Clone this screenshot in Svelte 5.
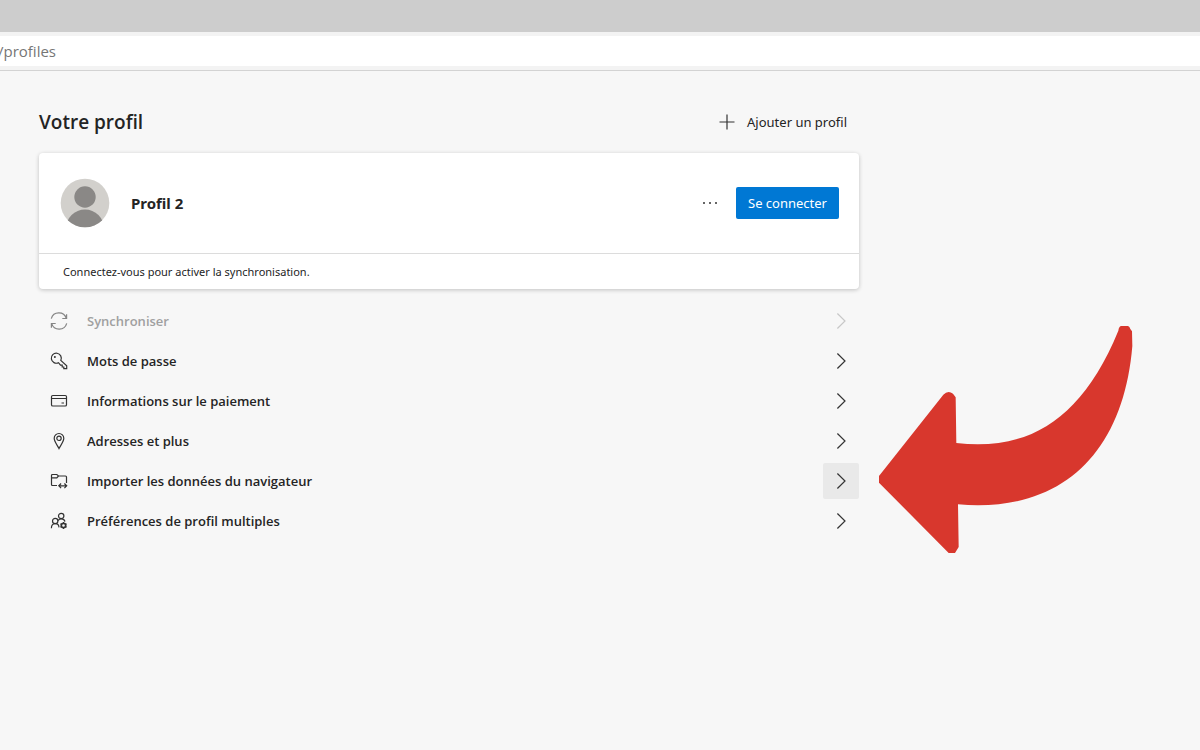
<script>
  const rows = [
    { id: 'sync', label: 'Synchroniser', disabled: true },
    { id: 'key', label: 'Mots de passe' },
    { id: 'card', label: 'Informations sur le paiement' },
    { id: 'pin', label: 'Adresses et plus' },
    { id: 'import', label: 'Importer les données du navigateur', active: true },
    { id: 'people', label: 'Préférences de profil multiples' }
  ];
</script>

<div class="page">
  <header>
    <div class="tabs"></div>
    <div class="toolbar">
      <input class="address" aria-label="Adresse" value="/profiles" />
    </div>
  </header>

  <main>
    <section class="content">
      <div class="heading">
        <h1>Votre profil</h1>
        <button class="add">
          <svg width="16" height="16" viewBox="0 0 16 16" aria-hidden="true">
            <path d="M8 .5v15M.5 8h15" />
          </svg>
          <span>Ajouter un profil</span>
        </button>
      </div>

      <div class="card">
        <div class="identity">
          <svg class="avatar" width="50" height="50" viewBox="0 0 50 50" aria-hidden="true">
            <clipPath id="disc"><circle cx="25" cy="25" r="24.3" /></clipPath>
            <circle cx="25" cy="25" r="24.3" fill="#d2d0cc" />
            <g clip-path="url(#disc)" fill="#8a8886">
              <circle cx="25" cy="19" r="10.7" />
              <circle cx="25" cy="50.5" r="19" />
            </g>
          </svg>
          <h2>Profil 2</h2>
          <button class="more" aria-label="Autres actions">
            <svg width="16" height="4" viewBox="0 0 16 4" aria-hidden="true">
              <circle cx="2" cy="2" r="1" /><circle cx="8" cy="2" r="1" /><circle cx="14" cy="2" r="1" />
            </svg>
          </button>
          <button class="signin">Se connecter</button>
        </div>
        <p>Connectez-vous pour activer la synchronisation.</p>
      </div>

      <nav>
        {#each rows as row (row.id)}
          <button class="row" class:active={row.active} disabled={row.disabled}>
            <svg class="icon" width="18" height="18" viewBox="0 0 18 18" aria-hidden="true">
              {#if row.id === 'sync'}
                <path d="M1.300 6.600a7.800 7.800 0 0 1 15-.2M16.600 2.200v4.300h-4.300M16.700 11.400a7.800 7.800 0 0 1-15 .2M1.400 15.800v-4.300h4.300" />
              {:else if row.id === 'key'}
                <path d="M8.500 10.700a5 5 0 1 1 2.300-2.300l5.900 5.400v2.900h-2.900v-1.700h-1.600v-1.900h-1.700z" />
                <circle class="dot" cx="4.900" cy="4.900" r="1" />
              {:else if row.id === 'card'}
                <rect x="1.500" y="3.500" width="15" height="10.500" rx="1.300" />
                <path d="M1.500 6.500h15M11.500 11h2.500" />
              {:else if row.id === 'pin'}
                <path d="M9 16.500C7.600 13.600 4.200 9.600 4.200 6.300a4.800 4.800 0 0 1 9.600 0c0 3.300-3.400 7.300-4.800 10.200z" />
                <circle cx="9" cy="6.300" r="2.200" />
              {:else if row.id === 'import'}
                <path d="M7 13.500H2.500a1 1 0 0 1-1-1v-9a1 1 0 0 1 1-1h4.300l1.700 1.500h7a1 1 0 0 1 1 1v6M1.500 5.800h5.300L8.500 4" />
                <path d="M9 13.800h7.500M11.100 11.500l-2.300 2.300 2.300 2.300M14.400 11.500l2.300 2.300-2.300 2.300" />
              {:else}
                <circle cx="11.200" cy="4" r="2.700" />
                <circle cx="5.200" cy="9" r="2.700" />
                <path d="M1.400 16.200c0-6 7.300-6 7.600-.8M8.100 8.600c1.400-2.400 6.200-2.300 6.800 1" />
                <circle class="gear" cx="13.500" cy="13.500" r="2.200" />
                <path d="M13.500 9.900v1.400M13.500 15.700v1.400M10.400 11.700l1.200.7M15.400 14.600l1.200.7M10.400 15.300l1.200-.7M15.400 12.400l1.200-.7" />
              {/if}
            </svg>
            <span class="label">{row.label}</span>
            <span class="chevron">
              <svg width="10" height="16" viewBox="0 0 10 16" aria-hidden="true">
                <path d="M1.400.5 9 8l-7.600 7.500" />
              </svg>
            </span>
          </button>
        {/each}
      </nav>
    </section>

    <svg class="arrow" width="255" height="229" viewBox="54 45 765 687" aria-hidden="true">
      <path d="M57 498 250 254Q264 240 279 251L287 262 289 399C505 424 665 330 775 62Q777 48 784 48L804 48Q809 50 811 57L816 64 817 108C790 430 605 610 294 583L296 711 285 729 266 729 57 518Z" />
    </svg>
  </main>
</div>

<style>
  :global(body) {
    margin: 0;
    background: #f7f7f7;
    color: #242424;
    font-family: "Noto Sans", "Open Sans", sans-serif;
  }

  button,
  input {
    margin: 0;
    padding: 0;
    border: 0;
    background: none;
    color: inherit;
    font: inherit;
  }

  h1,
  h2,
  p {
    margin: 0;
  }

  svg {
    display: block;
    flex: none;
  }

  .tabs {
    height: 32px;
    background: #cdcdcd;
  }

  .toolbar {
    padding: 4px 0;
    background: #f3f3f3;
    border-bottom: 1px solid #d3d3d3;
  }

  .address {
    display: block;
    box-sizing: border-box;
    width: 100%;
    height: 30px;
    background: #fff;
    color: #767676;
    font-family: "Open Sans", "Noto Sans", sans-serif;
    font-size: 15px;
    text-indent: -2px;
    outline: 0;
  }

  main {
    display: flex;
    align-items: flex-start;
    gap: 19px;
    padding: 33px 39px;
  }

  .content {
    flex: 0 1 820px;
    min-width: 0;
  }

  .heading {
    display: flex;
    align-items: center;
    justify-content: space-between;
    height: 36px;
    padding-right: 12px;
    margin-bottom: 13px;
  }

  h1 {
    font-family: "Open Sans", "Noto Sans", sans-serif;
    font-size: 19px;
    font-weight: 600;
  }

  .add {
    display: flex;
    align-items: center;
    gap: 12px;
    font-size: 13px;
    line-height: 16px;
  }

  .add svg,
  .icon,
  .chevron svg {
    fill: none;
    stroke: #333;
    stroke-width: 1.2;
  }

  .icon .dot {
    fill: #333;
    stroke: none;
  }

  .icon .gear {
    stroke-width: 1.7;
  }

  .card {
    border-radius: 4px;
    background: #fff;
    box-shadow: 0 1px 4px rgba(0, 0, 0, 0.22);
  }

  .identity {
    display: flex;
    align-items: center;
    height: 100px;
    padding: 0 20px 0 21px;
    border-bottom: 1px solid #dcdcdc;
  }

  h2 {
    flex: 1;
    margin-left: 21px;
    font-size: 15px;
    font-weight: 700;
  }

  .more {
    display: grid;
    place-items: center;
    width: 32px;
    height: 32px;
    margin-right: 10px;
    fill: #333;
  }

  .signin {
    height: 32px;
    padding: 0 12px;
    border-radius: 2px;
    background: #0078d4;
    color: #fff;
    font-size: 13px;
  }

  p {
    padding: 0 24px;
    font-size: 11px;
    line-height: 35px;
  }

  nav {
    display: flex;
    flex-direction: column;
    gap: 4px;
    padding-top: 14px;
  }

  .row {
    display: flex;
    align-items: center;
    width: 100%;
    height: 36px;
    padding-left: 11px;
    text-align: left;
    font-family: "Open Sans", "Noto Sans", sans-serif;
    font-size: 13px;
    font-weight: 600;
  }

  .label {
    flex: 1;
    margin-left: 19px;
  }

  .chevron {
    display: grid;
    place-items: center;
    width: 36px;
    height: 36px;
    border-radius: 2px;
  }

  .active .chevron {
    background: #e9e9e9;
  }

  .row:disabled {
    color: #a0a0a0;
  }

  .row:disabled .icon {
    stroke: #858585;
  }

  .row:disabled .chevron svg {
    stroke: #c8c8c8;
  }

  .arrow {
    margin-top: 221px;
    fill: #d8372d;
  }
</style>
